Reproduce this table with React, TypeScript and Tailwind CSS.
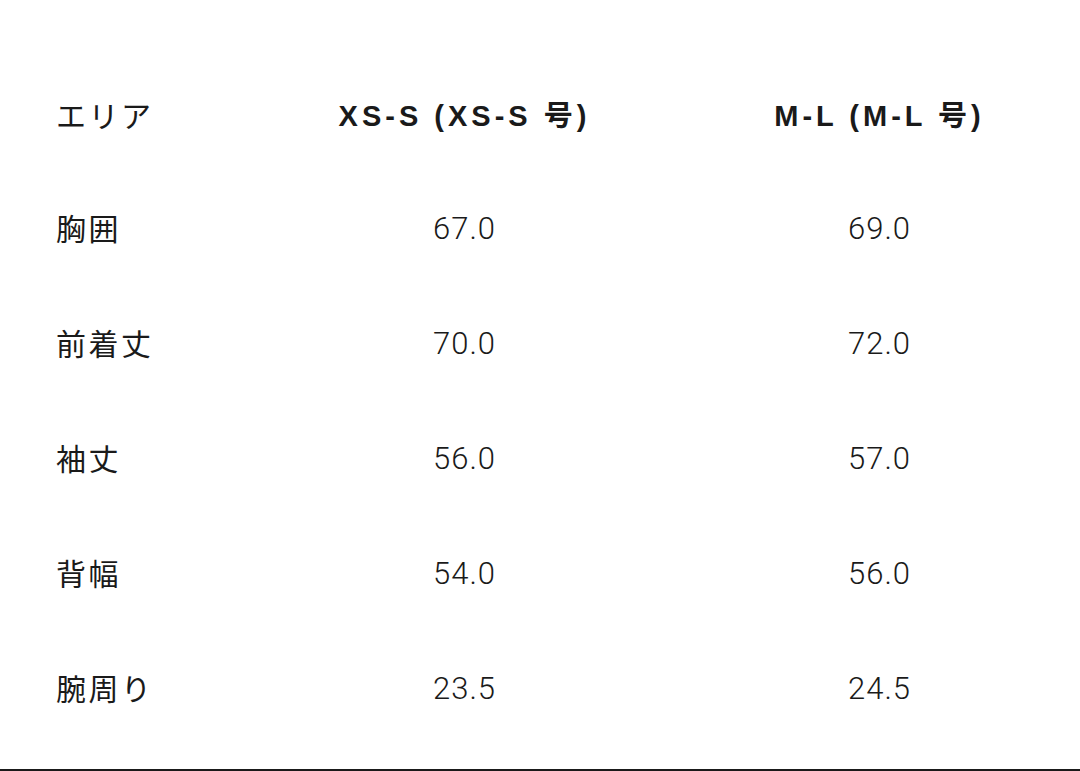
import React from 'react';

const rows: [string, string, string][] = [
  ['胸囲', '67.0', '69.0'],
  ['前着丈', '70.0', '72.0'],
  ['袖丈', '56.0', '57.0'],
  ['背幅', '54.0', '56.0'],
  ['腕周り', '23.5', '24.5'],
];

const font = { fontFamily: '"Liberation Sans", "Noto Sans CJK JP", sans-serif' };
const numFont = { fontFamily: 'Roboto, "Liberation Sans", sans-serif' };

export default function App() {
  return (
    <div className="w-[1080px] h-[771px] bg-white text-[#1a1a1a] flex flex-col" style={font}>
      <div className="pt-[61px] pl-[56px] flex-1">
        <div className="grid grid-cols-[201px_415px_415px] h-[111px] items-center">
          <div className="text-[30px] tracking-[2.5px]">エリア</div>
          <div className="text-center text-[29px] font-bold tracking-[4px]">XS-S (XS-S 号)</div>
          <div className="text-center text-[29px] font-bold tracking-[4px]">M-L (M-L 号)</div>
        </div>
        {rows.map(([label, a, b]) => (
          <div key={label} className="grid grid-cols-[201px_415px_415px] h-[115px] items-center">
            <div className="text-[30px] tracking-[2.5px]">{label}</div>
            <div className="text-center text-[31px] font-light tracking-[1px]" style={numFont}>{a}</div>
            <div className="text-center text-[31px] font-light tracking-[1px]" style={numFont}>{b}</div>
          </div>
        ))}
      </div>
      <div className="h-[2px] bg-[#1a1a1a]" />
    </div>
  );
}
